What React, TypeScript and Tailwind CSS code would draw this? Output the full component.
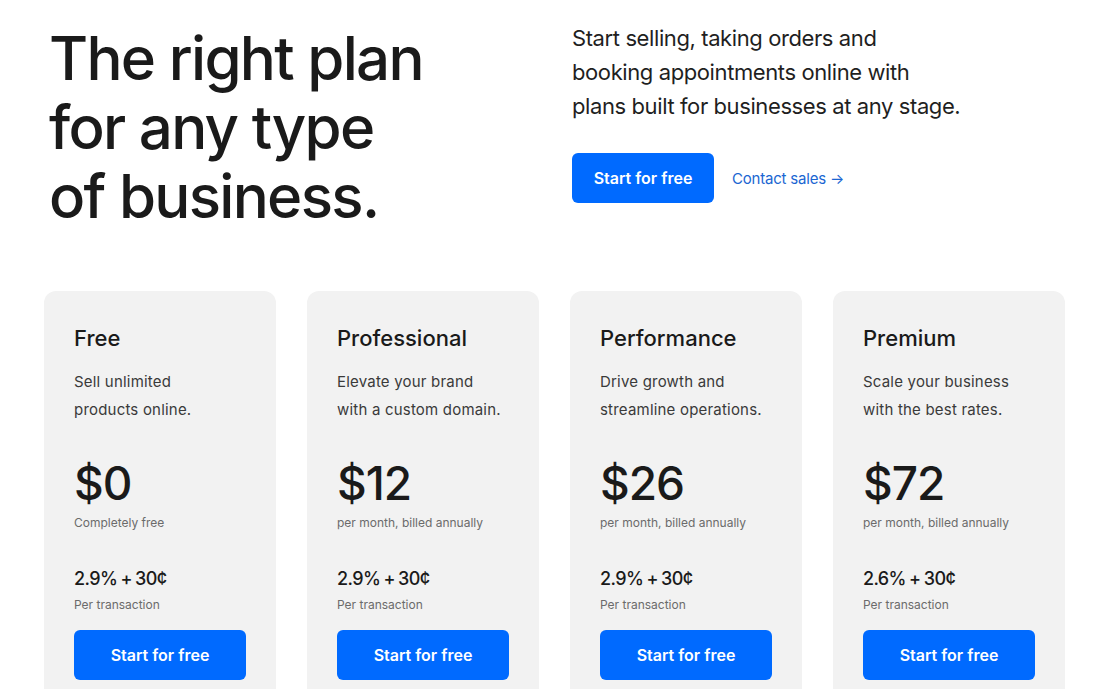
import React from 'react'

const plans = [
  { name: 'Free', desc: ['Sell unlimited', 'products online.'], price: '$0', note: 'Completely free', rate: '2.9% + 30¢' },
  { name: 'Professional', desc: ['Elevate your brand', 'with a custom domain.'], price: '$12', note: 'per month, billed annually', rate: '2.9% + 30¢' },
  { name: 'Performance', desc: ['Drive growth and', 'streamline operations.'], price: '$26', note: 'per month, billed annually', rate: '2.9% + 30¢' },
  { name: 'Premium', desc: ['Scale your business', 'with the best rates.'], price: '$72', note: 'per month, billed annually', rate: '2.6% + 30¢' },
]

function PlanCard({ plan }: { plan: (typeof plans)[number] }) {
  return (
    <div className="bg-[#f2f2f2] rounded-xl px-[30px] pt-[33px] pb-8 flex flex-col">
      <h3 className="text-[22px] leading-[28px] font-medium text-[#1a1a1a]">{plan.name}</h3>
      <p className="mt-4 text-[15px] leading-[28px] text-[#3a3a3a] tracking-[0.2px]">
        {plan.desc[0]}
        <br />
        {plan.desc[1]}
      </p>
      <div className="mt-[33px] text-[46px] leading-[52px] font-medium text-[#1a1a1a] tracking-[-1px]">{plan.price}</div>
      <div className="mt-[6px] text-[12px] leading-4 text-[#6b6b6b]">{plan.note}</div>
      <div className="mt-[36px] text-[18px] leading-6 font-medium text-[#1a1a1a] tracking-[-0.6px] [word-spacing:-1px]">{plan.rate}</div>
      <div className="mt-[6px] text-[12px] leading-4 text-[#6b6b6b]">Per transaction</div>
      <button className="mt-[17px] h-[50px] w-full rounded-md bg-[#006aff] text-white text-[16px] font-semibold">
        Start for free
      </button>
    </div>
  )
}

export default function App() {
  return (
    <div className="min-h-screen bg-white px-[44px] font-['Inter',sans-serif] overflow-hidden">
      <div className="flex">
        <div className="w-[528px] pl-[5px] pt-[24px]">
          <h1 className="text-[60px] leading-[69px] font-medium text-[#1a1a1a] tracking-[-1.7px]">
            The right plan
            <br />
            for any type
            <br />
            of business.
          </h1>
        </div>
        <div className="pt-[21px]">
          <p className="text-[22px] leading-[34px] text-[#1f1f1f] tracking-[-0.4px]">
            Start selling, taking orders and
            <br />
            booking appointments online with
            <br />
            plans built for businesses at any stage.
          </p>
          <div className="mt-[30px] flex items-center gap-[18px]">
            <button className="h-[50px] w-[142px] rounded-md bg-[#006aff] text-white text-[16px] font-semibold">
              Start for free
            </button>
            <a href="#" className="mt-[3px] text-[15px] text-[#1b66d2] tracking-[-0.2px]">
              Contact sales →
            </a>
          </div>
        </div>
      </div>
      <div className="mt-[60px] grid grid-cols-4 gap-[31px] w-[1021px]">
        {plans.map((p) => (
          <PlanCard key={p.name} plan={p} />
        ))}
      </div>
    </div>
  )
}
